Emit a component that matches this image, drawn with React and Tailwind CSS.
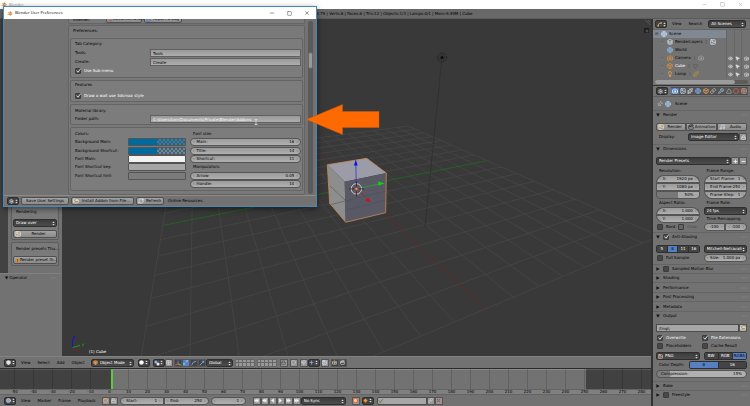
import { Box, Camera, Clapperboard, Globe, Image, Layers, Lightbulb, Link, Lock, Magnet, Music, Pin, Settings, Sparkles, Triangle, Wrench, Circle, Eye, MousePointer2, RefreshCw, FolderOpen, Minus, Square, X, Plus, Spline, Grid2x2, Maximize2 } from 'lucide-react';

/* ---------- small building blocks ---------- */

function BlenderLogo({ className }) {
  return (
    <svg viewBox="0 0 18 14" className={className}>
      <path d="M1 11 L8 5 H3 V3.4 H10 L8 1.6 L9.6 0.6 L16 6 A5.4 5 0 1 1 5.6 9 L3 11.6 Z" fill="#e87d0d" />
      <circle cx="11" cy="8.6" r="3" fill="#fff" />
      <circle cx="11" cy="8.6" r="1.8" fill="#265787" />
    </svg>
  );
}

function UpDown({ className = "" }) {
  return (
    <svg viewBox="0 0 4 6" className={"w-[3px] h-[5px] shrink-0 " + className}>
      <path d="M0.4 2.3 L2 0.2 L3.6 2.3 Z M0.4 3.7 L2 5.8 L3.6 3.7 Z" fill="#d8d8d8" />
    </svg>
  );
}

function Select({ label, value, icon, className = "" }) {
  return (
    <span className={"relative flex items-center h-[8px] rounded-[2px] border border-[#2e2e2e] bg-linear-to-b from-[#3c3c3c] to-[#4c4c4c] text-white " + className}>
      {icon && <span className="pl-px shrink-0">{icon}</span>}
      <select aria-label={label} defaultValue={value} className="appearance-none bg-transparent outline-none flex-1 min-w-0 w-full h-[6px] pl-[2px]">
        <option className="text-black">{value}</option>
      </select>
      <UpDown className="absolute right-[1px] top-[1px] pointer-events-none" />
    </span>
  );
}

function IconSelect({ label, children, className = "" }) {
  return (
    <button type="button" aria-label={label} className={"flex items-center justify-around h-[8px] w-[12px] shrink-0 rounded-[2px] border border-[#2e2e2e] bg-[#444444] text-[#dddddd] " + className}>
      {children}
      <UpDown />
    </button>
  );
}

function Button({ icon, children, className = "" }) {
  return (
    <button type="button" className={"flex items-center h-[8px] min-w-0 rounded-[2px] border border-[#505050] bg-linear-to-b from-[#a3a3a3] to-[#8b8b8b] text-black whitespace-nowrap " + className}>
      {icon && <span className="shrink-0 pl-px">{icon}</span>}
      <span className="flex-1 text-center">{children}</span>
    </button>
  );
}

function IconButton({ label, active, dark, children, className = "" }) {
  const tone = active ? "bg-[#5680c2]" : dark ? "bg-[#444444]" : "bg-[#959595]";
  return (
    <button type="button" aria-label={label} className={"flex items-center justify-center w-[8px] h-[8px] shrink-0 border border-[#555555] " + tone + " " + className}>
      {children}
    </button>
  );
}

function NumberField({ label, name, value, className = "" }) {
  return (
    <label className={"flex items-center min-w-0 h-[8px] rounded-full border border-[#555555] bg-linear-to-b from-[#9b9b9b] to-[#b0b0b0] px-[2px] text-black whitespace-nowrap " + className}>
      <span className="text-[#555555]">‹</span>
      {label && <span className="pl-[2px] shrink-0">{label}</span>}
      <input type="text" aria-label={name} defaultValue={value} className="flex-1 w-0 min-w-0 h-[6px] bg-transparent text-right outline-none pr-[2px]" />
      <span className="text-[#555555]">›</span>
    </label>
  );
}

function Checkbox({ label, checked, lit, dim, bare, className = "" }) {
  return (
    <label className={"relative flex items-center gap-[3px] h-[8px] whitespace-nowrap " + (lit ? "text-white " : dim ? "text-[#4b4b4b] " : "text-black ") + className}>
      <input type="checkbox" aria-label={label} defaultChecked={checked} className={"appearance-none w-[6px] h-[6px] shrink-0 rounded-[1px] border border-[#3c3c3c] " + (dim ? "bg-[#656565]" : "bg-[#484848]")} />
      {checked && (
        <svg viewBox="0 0 8 8" className="absolute left-0 top-0 w-[7px] h-[7px] pointer-events-none">
          <path d="M1.8 4 L3.4 6 L6.6 1.8" fill="none" stroke="#e8e8e8" strokeWidth="1" />
        </svg>
      )}
      {!bare && label}
    </label>
  );
}

/* ---------- 3D viewport ---------- */

// floor corners on screen, unit square mapped through a projective transform
const FLOOR = [[408, 126], [659, 236], [124, 461], [174, 157]];

function project(u, v) {
  const [[x0, y0], [x1, y1], [x2, y2], [x3, y3]] = FLOOR;
  const dx1 = x1 - x2, dx2 = x3 - x2, sx = x0 - x1 + x2 - x3;
  const dy1 = y1 - y2, dy2 = y3 - y2, sy = y0 - y1 + y2 - y3;
  const det = dx1 * dy2 - dx2 * dy1;
  const g = (sx * dy2 - dx2 * sy) / det;
  const h = (dx1 * sy - sx * dy1) / det;
  const w = g * u + h * v + 1;
  return [
    ((x1 - x0 + g * x1) * u + (x3 - x0 + h * x3) * v + x0) / w,
    ((y1 - y0 + g * y1) * u + (y3 - y0 + h * y3) * v + y0) / w,
  ];
}

function FloorLine({ from, to, stroke }) {
  const [x1, y1] = project(...from);
  const [x2, y2] = project(...to);
  return <line x1={x1} y1={y1} x2={x2} y2={y2} stroke={stroke} strokeWidth="0.8" />;
}

function Viewport() {
  const steps = Array.from({ length: 17 }, (_, i) => i / 16).filter((t) => t !== 0.5);
  return (
    <div className="relative flex-1 min-w-0 bg-[#393939] overflow-hidden">
      <svg viewBox="62 19 589 338" preserveAspectRatio="xMinYMin slice" className="block w-full h-full">
        {steps.map((t) => (
          <g key={t}>
            <FloorLine from={[t, 0]} to={[t, 1]} stroke="#464646" />
            <FloorLine from={[0, t]} to={[1, t]} stroke="#464646" />
          </g>
        ))}
        <FloorLine from={[0.5, 0]} to={[0.5, 1]} stroke="#1f6a1f" />
        <FloorLine from={[0, 0.5]} to={[1, 0.5]} stroke="#6c2424" />

        {/* lamp */}
        <line x1="441.5" y1="62" x2="425" y2="227" stroke="#2d2d2d" strokeWidth="0.7" />
        <circle cx="442" cy="57.5" r="4.6" fill="none" stroke="#1a1a1a" strokeWidth="0.9" strokeDasharray="1.2 1.2" />
        <circle cx="442" cy="57.5" r="2.8" fill="none" stroke="#1a1a1a" strokeWidth="0.6" strokeDasharray="1 1" />
        <circle cx="442" cy="57.5" r="1.5" fill="#0c0c0c" />

        {/* cube */}
        <path d="M327.3 164.7 L366.7 158.3 L386.3 173 L344.7 181.7 Z" fill="#9c9ba8" />
        <path d="M327.3 164.7 L344.7 181.7 L345.7 222.3 L329.7 203.3 Z" fill="#8d8d8d" />
        <path d="M344.7 181.7 L386.3 173 L385.7 212.7 L345.7 222.3 Z" fill="#595966" />
        <path d="M329 205 L386 191 M330 186 L345 200 M346 210 L386 200" stroke="#4d4d58" strokeWidth="0.5" />
        <path d="M327.3 164.7 L366.7 158.3 L386.3 173 L385.7 212.7 L345.7 222.3 L329.7 203.3 Z" fill="none" stroke="#c98a50" strokeWidth="0.8" />

        {/* manipulator */}
        <line x1="356.3" y1="187" x2="355.8" y2="163" stroke="#3434c8" strokeWidth="0.8" />
        <path d="M354 165.5 L355.8 159.5 L357.7 165.5 Z" fill="#1010e0" />
        <line x1="361" y1="188" x2="379" y2="184" stroke="#1fae1f" strokeWidth="0.8" />
        <path d="M378 181.6 L384.5 183.3 L378.6 185.8 Z" fill="#12d012" />
        <line x1="359" y1="191" x2="366" y2="198" stroke="#a02020" strokeWidth="0.7" />
        <path d="M365 200.8 L368 197.6 L371 202.6 Z" fill="#cc1212" />
        <circle cx="356.4" cy="188.9" r="5.2" fill="none" stroke="#d8d8d8" strokeWidth="0.9" />
        <circle cx="356.4" cy="188.9" r="3.6" fill="none" stroke="#c04040" strokeWidth="0.9" strokeDasharray="1.6 1.6" />
        <path d="M356.4 181.5 V186.5 M356.4 191.5 V196.5 M349 188.9 H354 M359 188.9 H364" stroke="#151515" strokeWidth="0.7" />
        <circle cx="356.4" cy="188.9" r="1.1" fill="#ff9a3c" />

        {/* axis gizmo */}
        <path d="M72.5 347.5 V339" stroke="#1414c8" strokeWidth="1" />
        <path d="M72.5 347.5 L80 345.5" stroke="#14a014" strokeWidth="1" />
        <path d="M73 348.5 L75.5 350" stroke="#901818" strokeWidth="1" />
        <path d="M82 343.6 L83 345 L84.4 343.6 M83 345 L82.4 346.6" stroke="#14a014" strokeWidth="0.7" fill="none" />
        <path d="M73 336.2 H75 L73 338.6 H75" stroke="#1414c8" strokeWidth="0.7" fill="none" />
        <path d="M77 349 L79 351.4 M79 349 L77 351.4" stroke="#901818" strokeWidth="0.7" />

        {/* area split handle */}
        <path d="M645.5 20 L650.5 25 M648 20 L650.5 22.5" stroke="#6c6c6c" strokeWidth="0.7" />
      </svg>
      <span className="absolute left-[27px] bottom-[1px] text-white">(1) Cube</span>
      <button type="button" aria-label="Show panel" className="absolute right-[2px] top-[9px] w-[5px] h-[5px] rounded-[1px] bg-[#1c1c1c] flex items-center justify-center">
        <Plus size={4} strokeWidth={3} color="#8a8a8a" />
      </button>
    </div>
  );
}

/* ---------- left tool shelf ---------- */

function ToolShelf() {
  return (
    <aside className="w-[62px] shrink-0 flex flex-col bg-[#727272]">
      <div className="flex-1 flex min-h-0">
        <div className="w-[8px] bg-[#424242]" />
        <div className="flex-1 min-w-0 flex flex-col justify-end gap-[2px] pl-[3px] pr-[3px] pb-[7px]">
          <section className="flex flex-col gap-[3px] rounded-[2px] border border-[#5c5c5c] bg-[#7a7a7a] px-px pb-px pt-[3px]">
            <h3 className="pl-[3px] whitespace-nowrap">Rendering</h3>
            <Select label="Rendering" value="Draw over" className="mt-px" />
            <Button icon={<Image size={6} color="#f2e3c8" strokeWidth={3} />}>Render</Button>
          </section>
          <section className="flex flex-col gap-[3px] rounded-[2px] border border-[#5c5c5c] bg-[#7a7a7a] px-px pb-px pt-[3px]">
            <h3 className="pl-[3px] whitespace-nowrap">Render presets Thu…</h3>
            <Button className="mt-px" icon={
              <svg viewBox="0 0 8 8" className="w-[5px] h-[6px]">
                <path d="M4 0.3 L7.8 7.6 H0.2 Z" fill="#f08a1c" />
                <path d="M4 2.6 V5.2 M4 6 V7" stroke="#1b1b1b" strokeWidth="1" />
              </svg>
            }>Render preset th…</Button>
          </section>
        </div>
      </div>
      <div className="h-[83px] shrink-0 border-t border-[#808080] px-[5px] pt-px flex items-start justify-between">
        <h3>▼ Operator</h3>
        <span className="text-[#999999] pr-px">::::</span>
      </div>
    </aside>
  );
}

/* ---------- headers ---------- */

function Menus({ items }) {
  return (
    <nav className="flex gap-[7px] pl-[5px] pr-[6px]">
      {items.map((m) => (
        <button key={m} type="button">{m}</button>
      ))}
    </nav>
  );
}

function LayerGrid() {
  return (
    <div className="grid grid-cols-5 grid-rows-2 w-[20px] h-[8px] shrink-0 gap-px rounded-[1px] bg-[#666666] p-px">
      {Array.from({ length: 10 }, (_, i) => (
        <button key={i} type="button" aria-label={"Layer " + (i + 1)} className="bg-[#999999]" />
      ))}
    </div>
  );
}

function ViewHeader() {
  return (
    <div className="h-[12px] shrink-0 flex items-center bg-[#727272] border-t border-[#828282] pl-[4px]">
      <IconSelect label="Editor type"><Box size={5} strokeWidth={3} fill="#e8e8e8" /></IconSelect>
      <Menus items={["View", "Select", "Add", "Object"]} />
      <Select label="Mode" value="Object Mode" className="w-[43px]" icon={<Box size={5} strokeWidth={2} color="#f4b477" fill="#d87a2a" />} />
      <IconSelect label="Viewport shading" className="ml-[4px]"><Circle size={5} fill="#ffffff" /></IconSelect>
      <IconSelect label="Pivot point" className="ml-[3px]">
        <svg viewBox="0 0 8 8" className="w-[6px] h-[6px]"><circle cx="2.6" cy="2.6" r="2" fill="#8fb6f0" /><circle cx="5.4" cy="5.4" r="2" fill="#e6eefa" /></svg>
      </IconSelect>
      <IconButton label="Manipulate centers"><Grid2x2 size={5} color="#d4d4d4" strokeWidth={3} /></IconButton>
      <IconButton label="Show manipulator" dark className="ml-px">
        <svg viewBox="0 0 8 8" className="w-[6px] h-[6px]"><path d="M4 5 V0.5" stroke="#4c7fff" strokeWidth="1.4" /><path d="M4 5 L7.6 7" stroke="#4cd04c" strokeWidth="1.4" /><path d="M4 5 L0.4 7" stroke="#ff4444" strokeWidth="1.4" /></svg>
      </IconButton>
      <IconButton label="Translate" active><Maximize2 size={5} color="#cfe0ff" strokeWidth={2} /></IconButton>
      <IconButton label="Rotate" dark><svg viewBox="0 0 8 8" className="w-[6px] h-[6px]"><path d="M1 7 Q1.5 2 7 1.5" fill="none" stroke="#6f9fe8" strokeWidth="1.3" /></svg></IconButton>
      <IconButton label="Scale" dark><svg viewBox="0 0 8 8" className="w-[6px] h-[6px]"><path d="M1 7 L5 3" stroke="#6f9fe8" strokeWidth="1.3" /><rect x="4.4" y="1" width="2.6" height="2.6" fill="#6f9fe8" /></svg></IconButton>
      <Select label="Orientation" value="Global" className="w-[27px]" />
      <div className="flex gap-[2px] ml-[2px]"><LayerGrid /><LayerGrid /></div>
      <div className="flex gap-[2px] ml-[3px]">
        <IconButton label="Lock to scene"><Lock size={5} strokeWidth={3} color="#555555" /></IconButton>
        <IconButton label="Proportional edit"><Circle size={5} strokeWidth={3} color="#c4c4c4" /></IconButton>
        <IconButton label="Snap"><Magnet size={5} strokeWidth={3} color="#d4d4d4" /></IconButton>
      </div>
      <IconSelect label="Snap element"><Plus size={5} strokeWidth={4} color="#7fb0f0" /></IconSelect>
      <IconButton label="Snap target" className="ml-px"><Image size={5} strokeWidth={3} color="#d7e6fa" /></IconButton>
      <IconButton label="Render image" dark className="ml-[2px]"><Camera size={5} strokeWidth={3} color="#f0e0c0" /></IconButton>
      <IconButton label="Render animation" dark><Clapperboard size={5} strokeWidth={3} color="#d8d8d8" /></IconButton>
    </div>
  );
}

const FRAMES = Array.from({ length: 34 }, (_, i) => i * 10 - 50);

const PLAYBACK = [
  ["Jump to start", "M1 1 V7 M7 1 L4 4 L7 7 Z M4 1 L1 4 L4 7 Z"],
  ["Previous keyframe", "M4 1 L1 4 L4 7 Z M7 1 L4 4 L7 7 Z"],
  ["Play reversed", "M6 1 L2 4 L6 7 Z"],
  ["Play", "M2 1 L6 4 L2 7 Z"],
  ["Next keyframe", "M1 1 L4 4 L1 7 Z M4 1 L7 4 L4 7 Z"],
  ["Jump to end", "M7 1 V7 M1 1 L4 4 L1 7 Z M4 1 L7 4 L4 7 Z"],
];

function Timeline() {
  return (
    <div className="shrink-0 border-t border-[#2b2b2b]">
      <div className="relative h-[20px] flex bg-[#727272]">
        <div className="w-[17%] bg-[#414141] border-t border-[#5a5a5a]" />
        <div className="flex-1 border-l-2 border-l-[#5fc83c] border-t border-t-[#8a8a8a]" />
        <div className="w-[10%] bg-[#414141] border-t border-[#5a5a5a]" />
        <div className="absolute inset-0 flex pl-[5px]">
          {FRAMES.map((f) => (
            <div key={f} className="flex-1 flex justify-center">{f !== 0 && <span className="w-px h-full bg-black/15" />}</div>
          ))}
        </div>
      </div>
      <div className="flex h-[6px] pl-[5px] bg-[#808080] border-y border-[#646464] leading-[4px]">
        {FRAMES.map((f) => (
          <span key={f} className="flex-1 min-w-0 text-center">{f}</span>
        ))}
      </div>
      <div className="h-[11px] flex items-center bg-[#727272] pl-[4px]">
        <IconSelect label="Editor type"><Circle size={5} strokeWidth={3} fill="#8ba0c0" /></IconSelect>
        <Menus items={["View", "Marker", "Frame", "Playback"]} />
        <IconButton label="Preview range"><Circle size={5} strokeWidth={4} color="#f0b070" /></IconButton>
        <IconButton label="Lock time cursor"><Lock size={5} strokeWidth={3} color="#dddddd" /></IconButton>
        <NumberField label="Start:" name="Start" value="1" className="w-[44px] ml-[2px] rounded-r-none" />
        <NumberField label="End:" name="End" value="250" className="w-[45px] rounded-l-none" />
        <NumberField name="Current frame" value="1" className="w-[35px] ml-[2px]" />
        <div className="flex ml-[7px]">
          {PLAYBACK.map(([name, d]) => (
            <IconButton key={name} label={name}>
              <svg viewBox="0 0 8 8" className="w-[5px] h-[5px]"><path d={d} fill="#f4f4f4" stroke="#f4f4f4" strokeWidth="0.6" /></svg>
            </IconButton>
          ))}
        </div>
        <Select label="Sync mode" value="No Sync" className="w-[45px]" />
        <IconButton label="Record" className="ml-[6px]"><Circle size={5} strokeWidth={4} color="#f05a28" fill="#ffd0a0" /></IconButton>
        <IconSelect label="Keyframe type" className="ml-[2px]">
          <svg viewBox="0 0 8 8" className="w-[5px] h-[5px]"><path d="M4 0.6 L7.4 4 L4 7.4 L0.6 4 Z" fill="#f09a2c" /></svg>
        </IconSelect>
        <label className="flex items-center ml-[3px] w-[50px] h-[8px] rounded-l-[2px] border border-[#4c4c4c] bg-[#a6a6a6]">
          <svg viewBox="0 0 8 8" className="w-[6px] h-[6px]"><path d="M2 7 L6.6 1.4 M1 3 L4 6" stroke="#7a6a4a" strokeWidth="1.1" /></svg>
          <input type="text" aria-label="Keying set" className="flex-1 w-0 h-[6px] bg-transparent outline-none" />
        </label>
        <IconButton label="Insert keyframe"><Link size={5} strokeWidth={3} color="#dddddd" /></IconButton>
        <IconButton label="Delete keyframe"><X size={5} strokeWidth={4} color="#b83a30" /></IconButton>
      </div>
    </div>
  );
}

/* ---------- right column ---------- */

const TREE = [
  { name: "Scene", icon: <Globe size={6} strokeWidth={3} color="#c3daf3" />, root: true },
  { name: "RenderLayers", icon: <Layers size={6} strokeWidth={3} color="#d9e6f5" />, extra: <Image size={6} strokeWidth={3} color="#d9e6f5" />, dot: true },
  { name: "World", icon: <Globe size={6} strokeWidth={3} color="#8fb6e8" /> },
  { name: "Camera", icon: <Camera size={6} strokeWidth={3} color="#f0932b" />, extra: <Camera size={6} strokeWidth={2} color="#b8b8b8" />, dot: true, toggles: true },
  { name: "Cube", icon: <Box size={6} strokeWidth={3} color="#f0932b" />, extra: <Triangle size={5} strokeWidth={2} color="#4f4f4f" className="rotate-180" />, dot: true, toggles: true, selected: true },
  { name: "Lamp", icon: <Lightbulb size={6} strokeWidth={3} color="#f0a83b" />, extra: <Sparkles size={6} strokeWidth={2} color="#c49a3a" />, dot: true, toggles: true },
];

function Outliner() {
  return (
    <div className="shrink-0">
      <div className="h-[11px] flex items-center pl-[2px] border-b border-[#666666]">
        <IconSelect label="Editor type"><Spline size={5} strokeWidth={3} color="#f0c070" /></IconSelect>
        <Menus items={["View", "Search"]} />
        <Select label="Display mode" value="All Scenes" className="flex-1 mr-[4px]" />
      </div>
      <div className="flex">
        <ul className="flex-1 min-w-0">
          {TREE.map((row) => (
            <li key={row.name} className={"flex items-center h-[8px] gap-[2px] " + (row.root ? "bg-[#808891] pl-[2px]" : "pl-[8px]")}>
              <span className="w-[4px] text-[#333333] shrink-0">{row.root ? "⊟" : row.dot ? "◦" : ""}</span>
              {row.icon}
              <span className={row.selected ? "text-white" : ""}>{row.name}</span>
              {row.extra && <span className="text-[#444444] px-px">|</span>}
              {row.extra}
            </li>
          ))}
        </ul>
        <div className="w-[24px] shrink-0 grid grid-cols-3 divide-x divide-[#666666] border-l border-[#666666]">
          {[Eye, MousePointer2, Camera].map((Icon, i) => (
            <div key={i} className="flex flex-col items-center pt-[24px]">
              {["Camera", "Cube", "Lamp"].map((n) => (
                <button key={n} type="button" aria-label={n + " visibility " + i} className="h-[8px] flex items-center">
                  <Icon size={5} strokeWidth={3} color="#e0e0e0" fill={i === 1 ? "#e0e0e0" : "none"} />
                </button>
              ))}
            </div>
          ))}
        </div>
      </div>
      <div className="h-[8px] flex items-center px-[2px] border-b border-[#333333]">
        <div className="flex-1 h-[4px] rounded-full bg-[#5c5c5c]"><div className="w-[86%] h-[4px] rounded-full bg-[#9c9c9c]" /></div>
      </div>
    </div>
  );
}

const TABS = [
  [Camera, "#ffffff"], [Image, "#c8d8ea"], [Sparkles, "#d0d0d0"], [Globe, "#7fa8e0"], [Box, "#f0a050"],
  [Link, "#bcbcbc"], [Wrench, "#a8c0dc"], [Triangle, "#a0a0a0"], [Circle, "#d06048"], [Grid2x2, "#d89a90"],
];

function PanelTitle({ open, check, checked, children, className = "" }) {
  return (
    <div className={"flex items-center gap-[3px] h-[9px] border-t border-[#656565] pl-[3px] pr-[3px] " + className}>
      <svg viewBox="0 0 6 6" className="w-[4px] h-[4px] shrink-0">
        <path d={open ? "M0.2 0.6 H5.8 L3 5.6 Z" : "M0.6 0.2 V5.8 L5.6 3 Z"} fill="#161616" />
      </svg>
      {check && <Checkbox bare label={children} checked={checked} />}
      <h2 className="flex-1">{children}</h2>
      <span className="text-[#999999]">::::</span>
    </div>
  );
}

function Segmented({ items, active, className = "" }) {
  return (
    <div className={"flex h-[8px] rounded-[2px] border border-[#2e2e2e] overflow-hidden divide-x divide-[#2e2e2e] " + className}>
      {items.map((item) => (
        <button key={item} type="button" className={"flex-1 leading-[6px] " + (item === active ? "bg-[#5680c2] text-black" : "bg-[#444444] text-white")}>{item}</button>
      ))}
    </div>
  );
}

function Properties() {
  return (
    <div className="flex-1 flex flex-col">
      <div className="h-[11px] flex items-center pl-[3px] gap-[3px] border-b border-[#5f5f5f]">
        <IconSelect label="Editor type"><Settings size={5} strokeWidth={3} /></IconSelect>
        <div className="flex flex-1 pr-[2px]">
          {TABS.map(([Icon, color], i) => (
            <button key={i} type="button" aria-label={"Tab " + (i + 1)} className={"flex-1 h-[8px] flex items-center justify-center border-y border-[#4c4c4c] " + (i === 0 ? "bg-[#4a73b4]" : "bg-[#555555]")}>
              <Icon size={6} strokeWidth={3} color={color} />
            </button>
          ))}
        </div>
      </div>
      <div className="h-[13px] flex items-center gap-[2px] pl-[4px]">
        <Pin size={6} strokeWidth={2} color="#d0d0d0" className="rotate-45" />
        <Globe size={6} strokeWidth={3} color="#a9cdf2" />
        <span className="pl-[2px]">Scene</span>
      </div>

      <PanelTitle open>Render</PanelTitle>
      <div className="px-[3px] pt-[4px] pb-[3px] flex flex-col gap-[2px]">
        <div className="flex">
          <Button className="flex-1 rounded-r-none" icon={<Image size={6} strokeWidth={3} color="#f2dfba" />}>Render</Button>
          <Button className="flex-1 rounded-none" icon={<Clapperboard size={6} strokeWidth={3} color="#3a3a3a" />}>Animation</Button>
          <Button className="flex-1 rounded-l-none" icon={<Music size={6} strokeWidth={3} color="#c6d4e4" />}>Audio</Button>
        </div>
        <div className="flex items-center">
          <span className="w-[32px] pl-[3px]">Display:</span>
          <Select label="Display" value="Image Editor" className="flex-1" />
          <IconButton label="Lock interface"><Lock size={5} strokeWidth={3} color="#e4e4e4" /></IconButton>
        </div>
      </div>

      <PanelTitle open>Dimensions</PanelTitle>
      <div className="px-[3px] pt-[4px]">
        <div className="flex items-center">
          <Select label="Render presets" value="Render Presets" className="flex-1" />
          <IconButton label="Add preset"><Plus size={5} strokeWidth={4} color="#f0f0f0" /></IconButton>
          <IconButton label="Remove preset"><Minus size={5} strokeWidth={4} color="#f0f0f0" /></IconButton>
        </div>
        <div className="grid grid-cols-2 gap-x-[4px] pt-[2px]">
          <div className="flex flex-col">
            <h4 className="h-[8px] pl-[3px] leading-[8px]">Resolution:</h4>
            <NumberField label="X:" name="Resolution X" value="1920 px" className="rounded-b-none" />
            <NumberField label="Y:" name="Resolution Y" value="1080 px" className="rounded-none" />
            <label className="flex h-[8px] rounded-b-[4px] border border-[#555555] bg-linear-to-r from-[#777777] from-50% to-[#a8a8a8] to-50%">
              <input type="text" aria-label="Resolution percentage" defaultValue="50%" className="w-full h-[6px] text-right pr-[5px] bg-transparent outline-none" />
            </label>
            <h4 className="h-[8px] pl-[3px] leading-[8px]">Aspect Ratio:</h4>
            <NumberField label="X:" name="Aspect X" value="1.000" className="rounded-b-none" />
            <NumberField label="Y:" name="Aspect Y" value="1.000" className="rounded-t-none" />
            <div className="grid grid-cols-2 pl-px">
              <Checkbox label="Bord" />
              <Checkbox label="Crop" dim />
            </div>
          </div>
          <div className="flex flex-col">
            <h4 className="h-[8px] pl-[3px] leading-[8px]">Frame Range:</h4>
            <NumberField label="Start Frame:" name="Start frame" value="1" className="rounded-b-none" />
            <NumberField label="End Frame:" name="End frame" value="250" className="rounded-none" />
            <NumberField label="Frame Step:" name="Frame step" value="1" className="rounded-t-none" />
            <h4 className="h-[8px] pl-[3px] leading-[8px]">Frame Rate:</h4>
            <Select label="Frame rate" value="24 fps" />
            <h4 className="h-[8px] pl-[3px] leading-[8px]">Time Remapping:</h4>
            <div className="grid grid-cols-2">
              <NumberField name="Old" value=":100" className="rounded-r-none" />
              <NumberField name="New" value=":100" className="rounded-l-none" />
            </div>
          </div>
        </div>
      </div>

      <PanelTitle open check checked className="mt-px">Anti-Aliasing</PanelTitle>
      <div className="px-[3px] pt-[4px] pb-[2px] grid grid-cols-2 gap-x-[4px] gap-y-px">
        <Segmented items={["5", "8", "11", "16"]} active="8" />
        <Select label="Filter" value="Mitchell-Netravali" />
        <Checkbox label="Full Sample" className="pl-px" />
        <NumberField label="Size:" name="Size" value="1.000 px" />
      </div>

      <PanelTitle check>Sampled Motion Blur</PanelTitle>
      <PanelTitle>Shading</PanelTitle>
      <PanelTitle className="h-[10px]">Performance</PanelTitle>
      <PanelTitle>Post Processing</PanelTitle>
      <PanelTitle className="h-[10px]">Metadata</PanelTitle>
      <PanelTitle open>Output</PanelTitle>
      <div className="px-[3px] pt-[4px] pb-[3px] flex flex-col gap-px">
        <div className="flex">
          <input type="text" aria-label="Output path" defaultValue="/tmp\" className="flex-1 min-w-0 h-[8px] border border-[#4c4c4c] bg-[#a6a6a6] px-[2px] outline-none" />
          <IconButton label="Browse"><FolderOpen size={6} strokeWidth={3} color="#f2e3bd" /></IconButton>
        </div>
        <div className="grid grid-cols-2 pl-px pt-px">
          <Checkbox label="Overwrite" checked lit />
          <Checkbox label="File Extensions" checked lit />
          <Checkbox label="Placeholders" />
          <Checkbox label="Cache Result" />
        </div>
        <div className="grid grid-cols-2 gap-x-[4px] pt-px">
          <Select label="File format" value="PNG" icon={<Image size={5} strokeWidth={3} color="#e8c8b8" />} />
          <Segmented items={["BW", "RGB", "RGBA"]} active="RGBA" />
        </div>
        <div className="flex items-center">
          <span className="w-[33px] pl-[3px]">Color Depth:</span>
          <Segmented items={["8", "16"]} active="8" className="flex-1" />
        </div>
        <label className="flex items-center h-[8px] rounded-full border border-[#555555] bg-linear-to-r from-[#808080] from-15% to-[#b0b0b0] to-15% px-[4px]">
          <span>Compression:</span>
          <input type="text" defaultValue="15%" className="flex-1 w-0 h-[6px] text-right bg-transparent outline-none" />
        </label>
      </div>
      <PanelTitle>Bake</PanelTitle>
      <PanelTitle check>Freestyle</PanelTitle>
    </div>
  );
}

/* ---------- preferences window ---------- */

function Group({ children, className = "" }) {
  return <section className={"rounded-[2px] border border-[#646464] bg-[#7c7c7c] pl-[4px] pr-px " + className}>{children}</section>;
}

function TextRow({ label, value, selected }) {
  return (
    <label className="flex items-center h-[8px]">
      <span className="w-[75px] shrink-0">{label}</span>
      <input type="text" defaultValue={value} className={"flex-1 min-w-0 h-[8px] border border-[#606060] bg-linear-to-b from-[#999999] to-[#aeaeae] px-[2px] outline-none " + (selected ? "text-white" : "")} />
    </label>
  );
}

const SWATCHES = [
  ["Background Main:", "#006a9f", 0.55],
  ["Background Shortcut:", "#006a9f", 0.2],
  ["Font Main:", "#f2f2f2", 1],
  ["Font Shortcut key:", "#a6a6a6", 1],
  ["Font Shortcut hint:", "#7c7c7c", 1],
];

function Swatch({ color, alpha }) {
  return (
    <span className="flex-1 flex h-[8px] rounded-[1px] border border-[#545454] overflow-hidden" style={{ backgroundColor: color }}>
      {alpha < 1 && (
        <span className="relative ml-auto w-1/2 h-full bg-[repeating-conic-gradient(#8a9096_0_25%,#5a6066_0_50%)] bg-size-[4px_4px]">
          <span className="absolute inset-0" style={{ backgroundColor: color, opacity: alpha }} />
        </span>
      )}
    </span>
  );
}

function PreferencesWindow() {
  return (
    <div className="absolute left-[3px] top-[6px] w-[314px] h-[201px] flex flex-col border border-[#4a88b8] bg-[#727272] shadow-[0_2px_6px_rgba(0,0,0,0.5)]">
      <div className="h-[12px] shrink-0 flex items-center bg-white font-['Open_Sans',sans-serif] pl-[3px] pr-[6px]">
        <BlenderLogo className="w-[6px] h-[5px]" />
        <h1 className="flex-1 pl-[2px] text-black font-medium">Blender User Preferences</h1>
        <div className="flex gap-[12px] text-[#333333]">
          <button type="button" aria-label="Minimize"><Minus size={6} strokeWidth={2} /></button>
          <button type="button" aria-label="Maximize"><Square size={5} strokeWidth={2} /></button>
          <button type="button" aria-label="Close"><X size={6} strokeWidth={2} /></button>
        </div>
      </div>

      <div className="flex-1 min-h-0 flex pl-[64px] pr-[3px]">
        <div className="flex-1 min-w-0 flex flex-col gap-px overflow-hidden">
          <div className="h-[5px] shrink-0 flex items-end overflow-hidden rounded-b-[2px] border border-t-0 border-[#646464] bg-[#797979] pl-[4px]">
            <span className="w-[33px]">Internet:</span>
            <Button className="w-[36px]" icon={<Pin size={5} color="#d04040" />}>Documentation</Button>
            <Button className="w-[38px] ml-[2px]" icon={<Globe size={5} color="#3c7cc8" />}>Report a Bug</Button>
          </div>
          <div className="flex-1 flex flex-col gap-[2px] rounded-[2px] border border-[#646464] bg-[#797979] px-px">
            <h2 className="h-[10px] pl-[3px] pt-[2px]">Preferences:</h2>
            <Group className="pt-px pb-[2px] flex flex-col gap-px">
              <h3 className="h-[8px] leading-[8px]">Tab Category:</h3>
              <TextRow label="Tools:" value="Tools" />
              <TextRow label="Create:" value="Create" />
              <Checkbox label="Use Sub-menu" checked lit />
            </Group>
            <Group className="pt-px pb-px">
              <h3 className="h-[8px]">Features</h3>
              <Checkbox label="Draw a wall use 3dsmax style" checked lit className="mt-[2px]" />
            </Group>
            <Group className="pt-[2px] pb-px">
              <h3 className="h-[8px] leading-[8px]">Material library:</h3>
              <TextRow label="Folder path:" value="C:\Users\tom\Documents\Private\Blender\Addons" selected />
            </Group>
            <Group className="flex-1 grid grid-cols-2 gap-[4px] pt-[2px] pb-[2px] mb-[3px]">
              <div className="grid grid-rows-7 items-center">
                <h3>Colors:</h3>
                {SWATCHES.map(([name, color, alpha]) => (
                  <div key={name} className="flex items-center">
                    <span className="w-[53px]">{name}</span>
                    <Swatch color={color} alpha={alpha} />
                  </div>
                ))}
              </div>
              <div className="grid grid-rows-7 items-center">
                <h3 className="pl-[3px]">Font size:</h3>
                <NumberField label="Main:" name="Main" value="16" />
                <NumberField label="Title:" name="Title" value="14" />
                <NumberField label="Shortcut:" name="Shortcut" value="11" />
                <h3 className="pl-[3px]">Manipulators:</h3>
                <NumberField label="Arrow:" name="Arrow" value="0.05" />
                <NumberField label="Handle:" name="Handle" value="10" />
              </div>
            </Group>
          </div>
        </div>
        <div className="w-[5px] ml-[3px] mb-px mt-[2px] rounded-full bg-[#5a5a5a] pt-[31px]">
          <div className="h-[17px] rounded-full border border-[#666666] bg-[#999999]" />
        </div>
      </div>

      <div className="h-[11px] shrink-0 flex items-center border-t border-[#8a8a8a] pl-[3px]">
        <IconSelect label="Editor type"><Settings size={5} strokeWidth={3} /></IconSelect>
        <Button className="w-[48px] ml-[2px]">Save User Settings</Button>
        <Button className="w-[63px] ml-[2px]" icon={<FolderOpen size={6} strokeWidth={3} color="#f2e3bd" />}>Install Addon from File…</Button>
        <Button className="w-[28px] ml-[2px]" icon={<RefreshCw size={6} strokeWidth={3} color="#e4e4e4" />}>Refresh</Button>
        <span className="pl-[4px]">Online Resources</span>
      </div>
    </div>
  );
}

export default function App() {
  return (
    <div className="relative h-screen flex flex-col overflow-hidden bg-[#393939] font-['DejaVu_Sans',sans-serif] text-[4px] leading-[6px] text-black">
      <div className="h-[9px] shrink-0 flex items-center bg-white font-['Open_Sans',sans-serif] text-[#999999] pl-px pr-[7px]">
        <BlenderLogo className="w-[6px] h-[5px]" />
        <span className="flex-1 pl-[2px]">Blender</span>
        <div className="flex gap-[13px]">
          <Minus size={5} strokeWidth={2} />
          <Square size={5} strokeWidth={2} />
          <X size={5} strokeWidth={2} />
        </div>
      </div>
      <div className="h-[10px] shrink-0 flex items-center bg-[#686868] border-b border-[#5a5a5a] pl-[314px] pt-px whitespace-nowrap">
        v2.79 | Verts:8 | Faces:6 | Tris:12 | Objects:1/3 | Lamps:0/1 | Mem:9.49M | Cube
      </div>

      <div className="flex-1 min-h-0 flex">
        <main className="flex-1 min-w-0 flex flex-col">
          <div className="flex-1 min-h-0 flex">
            <ToolShelf />
            <Viewport />
          </div>
          <ViewHeader />
          <Timeline />
        </main>
        <aside className="w-[99px] shrink-0 flex flex-col bg-[#727272] border-l-2 border-[#333333]">
          <Outliner />
          <Properties />
        </aside>
      </div>

      <PreferencesWindow />

      {/* callout arrow pointing at the folder path */}
      <svg viewBox="0 0 74 32" className="absolute left-[306px] top-[104px] w-[74px] h-[32px]">
        <path d="M0.5 15.5 L36.5 0.5 V7.5 H73 V23.5 H36.5 V30.5 Z" fill="#ff6a00" stroke="#c85a10" strokeWidth="0.5" />
      </svg>
      {/* text cursor */}
      <svg viewBox="0 0 4 6" className="absolute left-[254px] top-[119px] w-[4px] h-[6px]">
        <path d="M0.6 0.5 H3.4 M2 0.5 V5.5 M0.6 5.5 H3.4" stroke="#e8e8e8" strokeWidth="0.7" />
      </svg>
    </div>
  );
}
